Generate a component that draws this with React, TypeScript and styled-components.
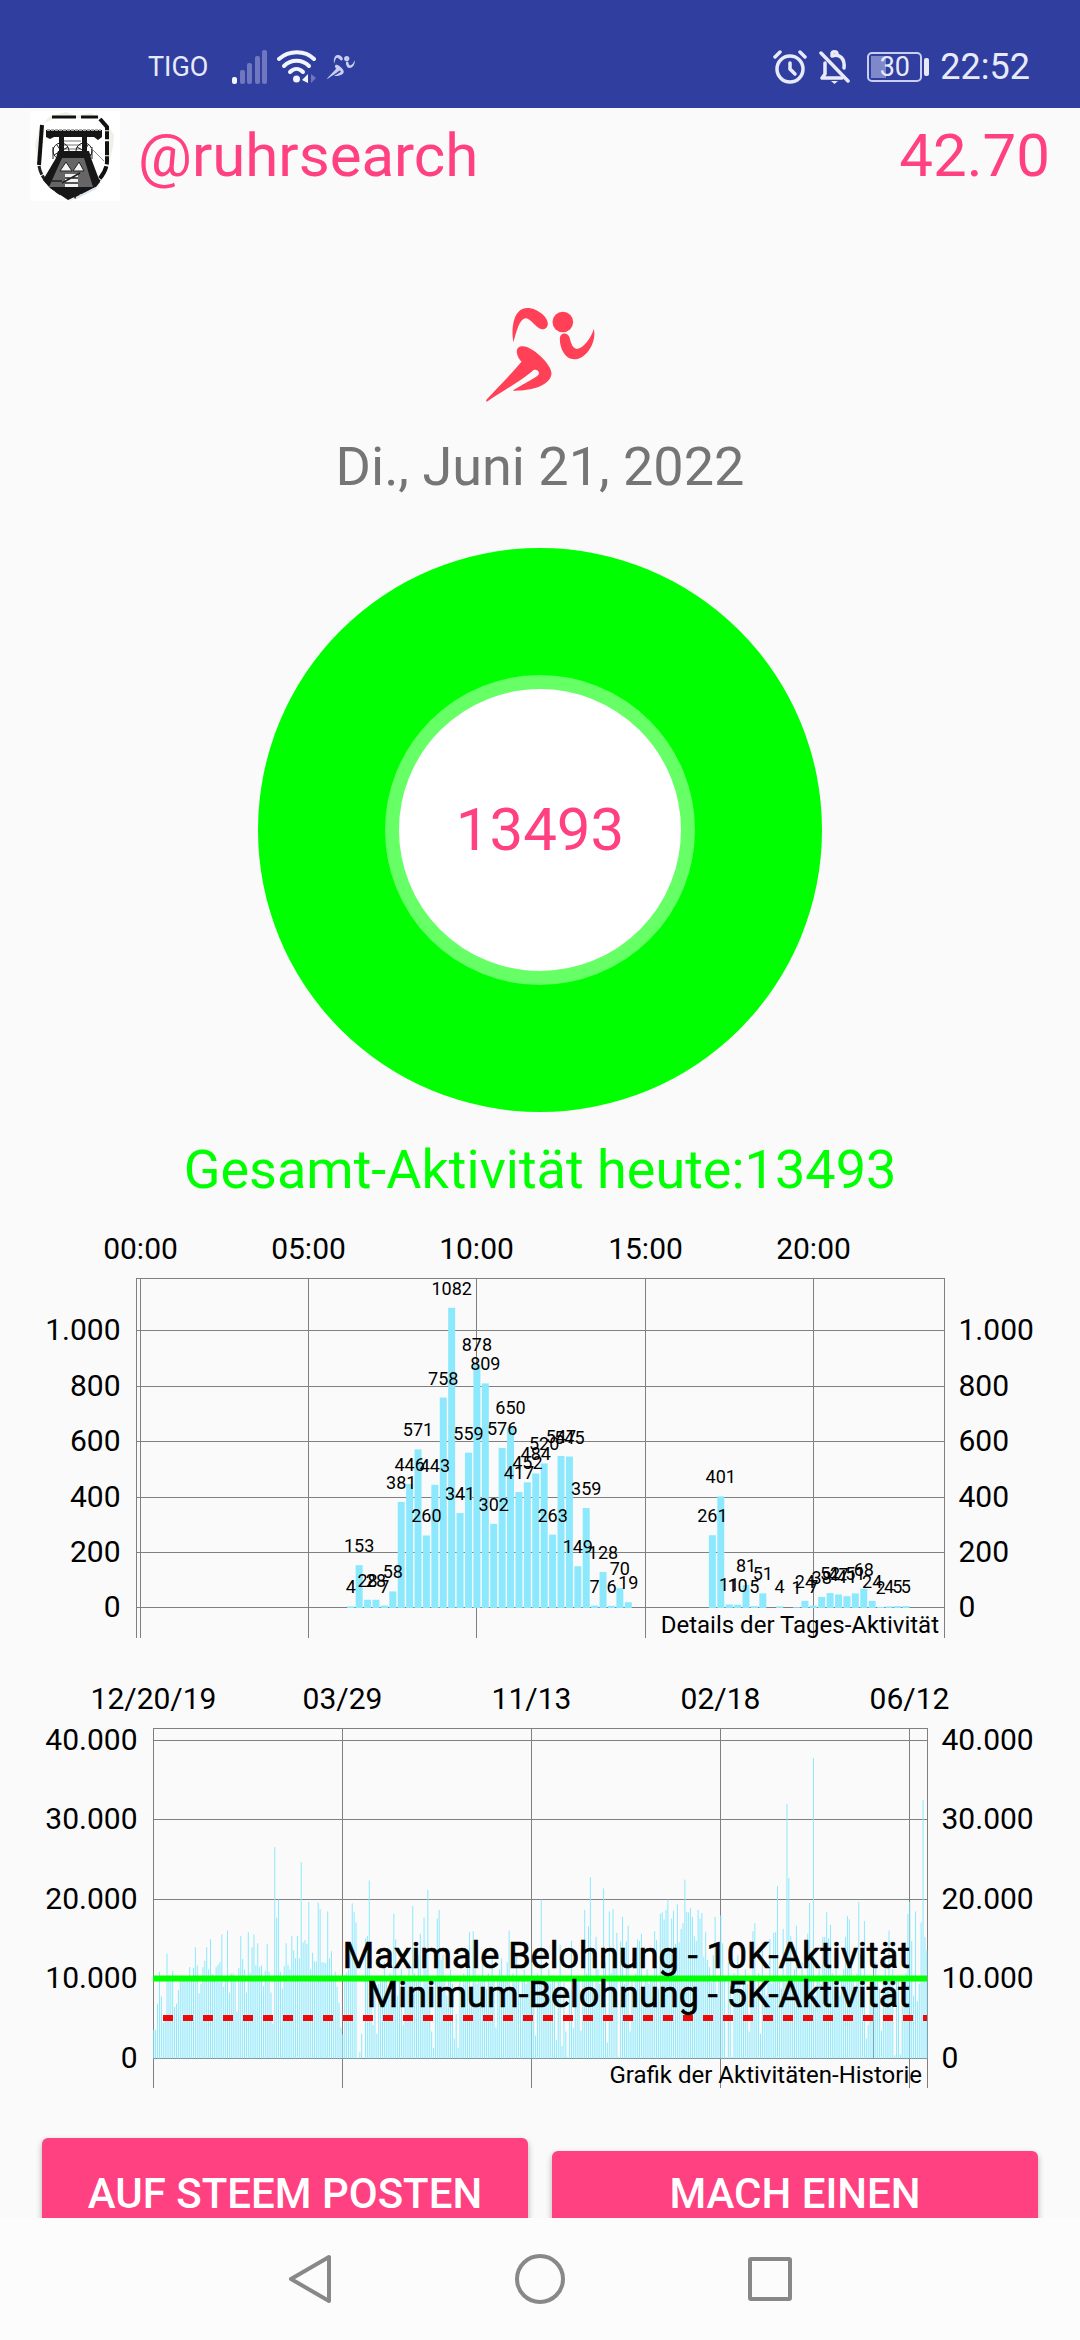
import React from "react";
import styled, { createGlobalStyle } from "styled-components";

const PINK = "#ff4081";
const BAR = "#8ce9fd";
const GRID = "#808080";

const GlobalStyle = createGlobalStyle`
  * { box-sizing: border-box; }
  body { margin: 0; background: #fafafa; font-family: Roboto, "Liberation Sans", sans-serif; }
  h1, p { margin: 0; font-weight: 400; }
`;

const Screen = styled.div`
  display: flex;
  flex-direction: column;
  height: 100vh;
  overflow: hidden;
`;

const StatusBar = styled.div`
  flex: none;
  display: flex;
  align-items: center;
  justify-content: space-between;
  height: 108px;
  padding: 25px 50px 0 148px;
  background: #303f9f;
  color: #e8eafa;
`;

const StatusGroup = styled.div<{ $gap: number }>`
  display: flex;
  align-items: center;
  gap: ${(p) => p.$gap}px;
`;

const Carrier = styled.span`
  margin-right: 14px;
  font-size: 27px;
`;

const Clock = styled.span`
  font-size: 36px;
`;

const Battery = styled.span`
  position: relative;
  display: flex;
  align-items: center;
  justify-content: center;
  width: 55px;
  height: 30px;
  margin: 0 6px 0 4px;
  border: 2px solid #c9cdf0;
  border-radius: 5px;
  font-size: 27px;
  background: linear-gradient(#7f88c8, #7f88c8) 2px 2px / 15px 22px no-repeat;

  &::after {
    content: "";
    position: absolute;
    right: -9px;
    width: 5px;
    height: 18px;
    border-radius: 2px;
    background: #e8eafa;
  }
`;

const Content = styled.main`
  flex: 1;
  min-height: 0;
  overflow: hidden;
`;

const Header = styled.header`
  display: flex;
  align-items: center;
  gap: 18px;
  height: 96px;
  padding: 0 30px;
  color: ${PINK};
  font-size: 60px;
  line-height: 70px;
`;

const UserName = styled.h1`
  flex: 1;
  font-size: 60px;
`;

const Summary = styled.section`
  display: flex;
  flex-direction: column;
  align-items: center;
  padding-top: 104px;
`;

const Line = styled.p<{ $color: string }>`
  color: ${(p) => p.$color};
  font-size: 54px;
  line-height: 64px;
`;

const DateLine = styled(Line)`
  margin-top: 33px;
`;

const Ring = styled.div`
  display: flex;
  align-items: center;
  justify-content: center;
  width: 564px;
  height: 564px;
  margin: 49px 0 26px;
  border-radius: 50%;
  background: #00ff00;
`;

const RingCentre = styled.div`
  display: flex;
  align-items: center;
  justify-content: center;
  width: 310px;
  height: 310px;
  border: 14px solid #66ff66;
  border-radius: 50%;
  background: #ffffff;
  color: ${PINK};
  font-size: 60px;
  line-height: 70px;
`;

const Charts = styled.section`
  display: flex;
  flex-direction: column;
  gap: 20px;
  padding-top: 18px;
`;

const ChartSvg = styled.svg`
  display: block;
  width: 100%;
  font-family: Roboto, "Liberation Sans", sans-serif;
`;

const Actions = styled.div`
  display: grid;
  grid-template-columns: 1fr 1fr;
  align-items: baseline;
  gap: 24px;
  padding: 46px 42px 0;
`;

const ActionButton = styled.button<{ $pad: number }>`
  padding: ${(p) => p.$pad}px 24px 64px;
  border: 0;
  border-radius: 6px;
  background: ${PINK};
  box-shadow: 0 3px 6px rgba(0, 0, 0, 0.3);
  color: #ffffff;
  font-family: inherit;
  font-size: 42px;
  font-weight: 500;
  line-height: 50px;
  text-transform: uppercase;
`;

const NavBar = styled.nav`
  flex: none;
  display: flex;
  justify-content: center;
  height: 122px;
  background: #fcfcfc;
`;

const NavButton = styled.button`
  display: flex;
  align-items: center;
  justify-content: center;
  width: 230px;
  padding: 0;
  border: 0;
  background: none;
`;

function Runner({ width, height, color }: { width: number; height: number; color: string }) {
  return (
    <svg width={width} height={height} viewBox="498 84 326 282" fill={color} aria-hidden="true">
      <path d="M580 186C573 150 577 84 622 84C650 84 684 110 683 132C682 147 668 151 657 145C643 137 630 115 616 115C598 118 590 150 580 186Z" />
      <circle cx="728" cy="126" r="31" />
      <path d="M719 176C719 158 742 154 748 172C752 190 758 206 770 207C790 205 812 175 821 147C830 185 800 238 762 238C734 237 719 205 719 176Z" />
      <path d="M590 218C588 200 603 196 620 201C655 215 694 258 694 280C692 318 630 334 578 332C590 322 640 298 655 284C660 274 650 267 640 270C610 298 560 325 500 365C497 364 498 360 500 358C530 325 575 280 604 245C598 238 592 230 590 218Z" />
    </svg>
  );
}

function Avatar() {
  return (
    <svg width="90" height="90" viewBox="0 0 90 90" role="img" aria-label="ruhrsearch">
      <rect width="90" height="90" fill="#fff" />
      <path d="M20 5L36 1L46 5L60 2L74 8L84 24L83 36L78 56L68 76L40 90L22 78L10 62L5 34L10 16Z" fill="#eef1e6" />
      <path d="M14 12L26 7H68L77 15V52C76 68 58 80 38 87C22 80 10 68 9 52V24Z" fill="#fff" />
      <path d="M22 6H46M51 6H68" stroke="#111" strokeWidth="3" />
      <path d="M12 14L9 54" stroke="#111" strokeWidth="4" />
      <path d="M9 55C11 67 20 76 31 83" fill="none" stroke="#222" strokeWidth="3" strokeDasharray="9 1" />
      <path d="M70 8L77 16V50C77 64 64 76 44 86" fill="none" stroke="#111" strokeWidth="4" strokeDasharray="14 1 8 2" />
      <path d="M34 30H51M34 34H51M34 38H51" stroke="#777" />
      <g fill="none" stroke="#222" strokeWidth="1">
        <circle cx="31" cy="40" r="8" />
        <circle cx="54" cy="40" r="8" />
        <path d="M24 44L38 36M27 34L35 46M47 36L61 44M50 46L58 34M23 48V36M62 48V36" />
        <path d="M60 36L74 50" stroke="#888" />
      </g>
      <path d="M16 19H72V26L68 29L64 26H24L20 28L16 26Z" fill="#161616" />
      <path d="M17 19H71" stroke="#aaa" strokeWidth="2" strokeDasharray="3 1" />
      <path d="M29 25H34V42H29ZM52 25H57V42H52Z" fill="#171717" />
      <path d="M28 40H59L61 47L70 71L66 76L38 89L20 77L13 69L26 47Z" fill="#171717" />
      <path d="M32 47H54L63 76H19Z" fill="#666" />
      <path d="M30 60L36 51L42 60ZM43 60L49 51L54 60Z" fill="#f4f4f4" stroke="#222" />
      <path d="M35 63H48V76H35Z" fill="#f3f3f3" />
      <path d="M32 72L50 62M35 67H48M35 72H48M20 70H32" stroke="#222" strokeWidth="1.5" />
      <path d="M46 87L66 77" stroke="#dce4ee" strokeWidth="2" />
    </svg>
  );
}

function Signal() {
  return (
    <svg width="35" height="34" viewBox="0 0 35 34" aria-hidden="true">
      <rect x="0" y="27" width="5" height="7" rx="2" fill="#f2f4ff" />
      <g fill="#6f78bf">
        <rect x="8" y="20" width="5" height="14" rx="2" />
        <rect x="15" y="13" width="5" height="21" rx="2" />
        <rect x="23" y="6" width="5" height="28" rx="2" />
        <rect x="30" y="0" width="5" height="34" rx="2" />
      </g>
    </svg>
  );
}

function Wifi() {
  return (
    <svg width="40" height="34" viewBox="0 0 40 34" aria-hidden="true">
      <g fill="none" stroke="#f2f4ff" strokeWidth="4" strokeLinecap="round">
        <path d="M2 9C12 0 28 0 37 9" />
        <path d="M7 16C14 9 25 9 32 16" />
        <path d="M13 22C17 18 22 18 26 22" />
      </g>
      <circle cx="19.5" cy="29" r="3.5" fill="#f2f4ff" />
      <path d="M25 30L31 24V33Z" fill="#f2f4ff" />
      <path d="M34 24V33L39 28Z" fill="#6f78bf" />
    </svg>
  );
}

function Alarm() {
  return (
    <svg width="34" height="34" viewBox="0 0 34 34" fill="none" stroke="#e8eafa" strokeWidth="3.5" strokeLinecap="round" aria-hidden="true">
      <circle cx="17" cy="19" r="13" />
      <path d="M17 13V19L22 24" />
      <path d="M2 7L7 2M27 2L32 7" />
    </svg>
  );
}

function MutedBell() {
  return (
    <svg width="32" height="34" viewBox="0 0 32 34" fill="none" stroke="#e8eafa" strokeWidth="3.5" strokeLinecap="round" aria-hidden="true">
      <path d="M2 3L29 31" />
      <path d="M6 13V24L3 28H23" strokeLinejoin="round" />
      <path d="M13 6C21 3 26 9 25 18" />
      <path d="M13 4C13 1 18 1 18 4" />
      <path d="M12 31H19L15.5 34Z" fill="#e8eafa" stroke="none" />
    </svg>
  );
}

/* Steps per quarter of an hour, keyed by the quarter's index in the day. */
const quarters: [number, number][] = [
  [25, 4], [26, 153], [27, 28], [28, 28], [29, 7], [30, 58], [31, 381], [32, 446], [33, 571], [34, 260],
  [35, 443], [36, 758], [37, 1082], [38, 341], [39, 559], [40, 878], [41, 809], [42, 302], [43, 576],
  [44, 650], [45, 417], [46, 452], [47, 484], [48, 520], [49, 263], [50, 547], [51, 545], [52, 149],
  [53, 359], [54, 7], [55, 128], [56, 6], [57, 70], [58, 19], [68, 261], [69, 401], [70, 11], [71, 10],
  [72, 81], [73, 5], [74, 51], [76, 4], [78, 1], [79, 24], [80, 7], [81, 38], [82, 52], [83, 47],
  [84, 41], [85, 51], [86, 68], [87, 24], [88, 2], [89, 4], [90, 5], [91, 5],
];

/* Daily history in hundreds of steps, keyed by day index. */
const recorded: Record<number, number> = {
  0: 36, 1: 36, 2: 69, 3: 109, 4: 78, 5: 45, 6: 50, 7: 132, 8: 100, 9: 100, 10: 110, 11: 65, 12: 69, 13: 86, 14: 98,
  19: 115, 20: 98, 21: 114, 22: 140, 23: 117, 24: 82, 25: 94, 26: 115, 27: 123, 28: 140, 29: 112, 30: 150,
  31: 106, 32: 98, 33: 115, 34: 118, 35: 121, 36: 156, 37: 90, 38: 102, 39: 161, 40: 83, 41: 107, 42: 107,
  43: 98, 44: 59, 45: 114, 46: 154, 47: 125, 48: 112, 49: 83, 50: 159, 51: 108, 52: 140, 53: 156, 54: 117,
  55: 145, 56: 115, 57: 117, 58: 91, 59: 110, 60: 144, 61: 109, 62: 83, 63: 44, 64: 266, 65: 177, 66: 200,
  67: 109, 68: 88, 69: 116, 70: 145, 71: 118, 72: 112, 73: 154, 74: 136, 75: 126, 76: 154, 77: 126, 78: 247,
  79: 146, 80: 149, 81: 144, 82: 197, 83: 112, 84: 133, 85: 122, 86: 122, 87: 196, 88: 188, 89: 121, 90: 121,
  91: 120, 92: 185, 93: 126, 94: 135, 95: 100, 96: 109, 97: 90, 98: 70, 99: 39, 100: 30, 101: 105, 102: 108,
  103: 112, 104: 145, 105: 195, 106: 184, 107: 171, 108: 1, 109: 8, 110: 31, 111: 0, 112: 151, 113: 154,
  114: 224, 115: 100, 116: 42, 117: 100, 118: 31, 127: 182, 128: 150, 132: 42, 137: 192, 141: 157, 143: 177,
  145: 212, 147: 34, 148: 13, 150: 176, 151: 187, 152: 124, 159: 25, 160: 56, 161: 13, 167: 159, 169: 160,
  181: 39, 184: 126, 188: 161, 202: 29, 205: 200, 213: 23, 215: 143, 216: 16, 218: 34, 219: 2, 221: 148,
  222: 38, 226: 35, 228: 187, 230: 166, 231: 228, 234: 153, 238: 214, 240: 20, 241: 185, 243: 188, 245: 158,
  246: 2, 247: 147, 248: 178, 250: 147, 251: 167, 252: 34, 256: 150, 257: 148, 258: 157, 265: 160, 266: 149,
  268: 182, 269: 184, 270: 175, 271: 187, 272: 200, 273: 140, 274: 176, 275: 186, 276: 144, 277: 194, 278: 146, 279: 163,
  280: 170, 281: 225, 282: 184, 283: 184, 284: 189, 285: 178, 286: 154, 287: 148, 288: 187, 289: 176,
  290: 183, 291: 128, 292: 159, 293: 124, 294: 115, 297: 178, 300: 180, 301: 145, 303: 2, 306: 2, 315: 34, 317: 160,
  318: 170, 321: 31, 322: 146, 326: 150, 328: 158, 329: 159, 330: 217, 333: 163, 335: 320, 336: 227,
  337: 154, 340: 167, 346: 157, 347: 196, 349: 378, 354: 153, 355: 153, 356: 184, 357: 151, 358: 168,
  366: 153, 367: 179, 368: 175, 373: 197, 376: 173, 377: 25, 378: 42, 385: 35, 389: 161, 392: 4, 395: 5, 399: 182,
  400: 197, 401: 148, 403: 185, 404: 72, 406: 171, 407: 325, 408: 153, 409: 136,
};

/* Typical days repeat this pattern when no exceptional value was recorded. */
const typical = [101, 112, 94, 104, 97, 121, 99, 88, 107, 96, 130, 100, 79];

const days = Array.from({ length: 410 }, (_, i) =>
  recorded[i] ?? (i > 13 && i < 19 ? 99 : typical[i % typical.length]),
);

type Tick = { at: number; label: string };

type FrameProps = {
  left: number;
  right: number;
  top: number;
  bottom: number;
  columns: Tick[];
  rows: Tick[];
};

function Frame({ left, right, top, bottom, columns, rows }: FrameProps) {
  return (
    <>
      <g stroke={GRID} strokeWidth="1" shapeRendering="crispEdges">
        <path d={`M${left} ${bottom}V${top}H${right}V${bottom}`} fill="none" />
        {rows.map((r) => (
          <line key={r.label} x1={left} x2={right} y1={r.at} y2={r.at} />
        ))}
        {columns.map((c) => (
          <line key={c.label} x1={c.at} x2={c.at} y1={top} y2={bottom} />
        ))}
      </g>
      <g fontSize="30" fill="#000">
        {columns.map((c) => (
          <text key={c.label} x={c.at} y={top - 20} textAnchor="middle">
            {c.label}
          </text>
        ))}
        {rows.map((r) => (
          <text key={r.label} x={left - 16} y={r.at + 9} textAnchor="end">
            {r.label}
          </text>
        ))}
        {rows.map((r) => (
          <text key={r.label} x={right + 14} y={r.at + 9}>
            {r.label}
          </text>
        ))}
      </g>
    </>
  );
}

function DayChart() {
  const base = 387.5;
  const unit = 0.277;
  const x = (quarter: number) => 140.5 + quarter * 8.41;
  const columns = [0, 5, 10, 15, 20].map((h) => ({
    at: Math.floor(x(h * 4)) + 0.5,
    label: `${String(h).padStart(2, "0")}:00`,
  }));
  const rows = [
    { at: 110.5, label: "1.000" },
    { at: 166.5, label: "800" },
    { at: 221.5, label: "600" },
    { at: 277.5, label: "400" },
    { at: 332.5, label: "200" },
    { at: 387.5, label: "0" },
  ];
  return (
    <ChartSvg viewBox="0 0 1080 420" role="img" aria-label="Details der Tages-Aktivität">
      <Frame left={136.5} right={944.5} top={58.5} bottom={417.5} columns={columns} rows={rows} />
      {quarters.map(([q, v]) => (
        <rect key={q} x={x(q) - 3.5} y={base - v * unit} width="7" height={v * unit + 0.5} fill={BAR} />
      ))}
      <g fontSize="18" textAnchor="middle">
        {quarters.map(([q, v]) => (
          <text key={q} x={x(q)} y={base - v * unit - 13}>
            {v}
          </text>
        ))}
      </g>
      <text x="939" y="413" fontSize="24" textAnchor="end">
        Details der Tages-Aktivität
      </text>
    </ChartSvg>
  );
}

function HistoryChart() {
  const base = 398.5;
  const unit = 0.795;
  const x = (day: number) => 153.5 + day * 1.89;
  const columns = ["12/20/19", "03/29", "11/13", "02/18", "06/12"].map((label, i) => ({
    at: 153.5 + i * 189,
    label,
  }));
  const rows = [
    { at: 80.5, label: "40.000" },
    { at: 159.5, label: "30.000" },
    { at: 239.5, label: "20.000" },
    { at: 318.5, label: "10.000" },
    { at: 398.5, label: "0" },
  ];
  return (
    <ChartSvg viewBox="0 0 1080 432" role="img" aria-label="Grafik der Aktivitäten-Historie">
      <Frame left={153.5} right={927.5} top={68.5} bottom={427.5} columns={columns} rows={rows} />
      <g fill={BAR}>
        {days.map((v, i) => (
          <rect key={i} x={x(i) - 0.2} y={base - v * unit} width="1" height={v * unit} />
        ))}
      </g>
      <line x1="873.5" x2="873.5" y1="307" y2="398" stroke="#7aa9b4" />
      <line x1="153" x2="927" y1="318.5" y2="318.5" stroke="#00ff00" strokeWidth="6" />
      <line x1="163" x2="927" y1="358" y2="358" stroke="#ee0808" strokeWidth="6" strokeDasharray="10 10" />
      <g fontSize="36" textAnchor="end" fill="#000" stroke="#000" strokeWidth="0.7">
        <text x="910" y="308">Maximale Belohnung - 10K-Aktivität</text>
        <text x="910" y="347">Minimum-Belohnung - 5K-Aktivität</text>
      </g>
      <text x="922" y="423" fontSize="24" textAnchor="end">
        Grafik der Aktivitäten-Historie
      </text>
    </ChartSvg>
  );
}

export default function App() {
  return (
    <Screen>
      <GlobalStyle />
      <StatusBar>
        <StatusGroup $gap={10}>
          <Carrier>TIGO</Carrier>
          <Signal />
          <Wifi />
          <Runner width={28} height={24} color="#c9cdf0" />
        </StatusGroup>
        <StatusGroup $gap={12}>
          <Alarm />
          <MutedBell />
          <Battery>30</Battery>
          <Clock>22:52</Clock>
        </StatusGroup>
      </StatusBar>
      <Content>
        <Header>
          <Avatar />
          <UserName>@ruhrsearch</UserName>
          <span>42.70</span>
        </Header>
        <Summary>
          <Runner width={109} height={94} color="#ff4057" />
          <DateLine $color="#757575">Di., Juni 21, 2022</DateLine>
          <Ring>
            <RingCentre>13493</RingCentre>
          </Ring>
          <Line $color="#00ff00">Gesamt-Aktivität heute:13493</Line>
        </Summary>
        <Charts>
          <DayChart />
          <HistoryChart />
        </Charts>
        <Actions>
          <ActionButton $pad={31}>Auf Steem posten</ActionButton>
          <ActionButton $pad={18}>Mach einen</ActionButton>
        </Actions>
      </Content>
      <NavBar>
        <NavButton aria-label="Zurück">
          <svg width="46" height="52" viewBox="0 0 46 52" fill="none" stroke="#888" strokeWidth="4" strokeLinejoin="round">
            <path d="M42 4V48L4 26Z" />
          </svg>
        </NavButton>
        <NavButton aria-label="Startseite">
          <svg width="52" height="52" viewBox="0 0 52 52" fill="none" stroke="#888" strokeWidth="4">
            <circle cx="26" cy="26" r="23" />
          </svg>
        </NavButton>
        <NavButton aria-label="Übersicht">
          <svg width="46" height="46" viewBox="0 0 46 46" fill="none" stroke="#888" strokeWidth="4" strokeLinejoin="round">
            <rect x="3" y="3" width="40" height="40" rx="1" />
          </svg>
        </NavButton>
      </NavBar>
    </Screen>
  );
}
